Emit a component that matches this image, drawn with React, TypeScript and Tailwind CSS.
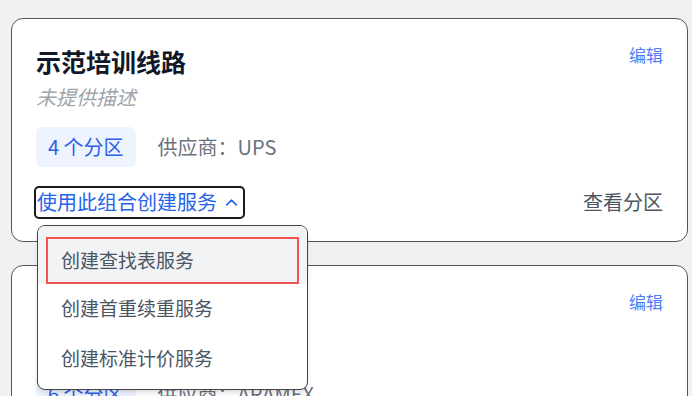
import { ChevronUp } from "lucide-react";

const font = { fontFamily: '"Noto Sans CJK SC", "Noto Sans", sans-serif' };

interface RouteCard {
  title: string;
  desc: string;
  zones: number;
  carrier: string;
}

const cards: RouteCard[] = [
  { title: "示范培训线路", desc: "未提供描述", zones: 4, carrier: "UPS" },
  { title: "中东专线", desc: "未提供描述", zones: 6, carrier: "ARAMEX" },
];

function Card({ card, open }: { card: RouteCard; open: boolean }) {
  return (
    <div className="rounded-xl border border-[#555] bg-white px-6 pt-6 pb-6 shrink-0">
      <div className="flex items-start justify-between">
        <div>
          <h2 className="text-[25px] font-bold leading-[36px] text-[#111827]">
            {card.title}
          </h2>
          <p className="mt-[3px] text-[20px] italic leading-[30px] text-[#a0a4ab]">
            {card.desc}
          </p>
        </div>
        <button className="text-[17px] leading-[24px] text-[#4f7cf7]">编辑</button>
      </div>

      <div className="mt-[15px] flex items-center gap-[22px]">
        <span className="flex h-[40px] items-center rounded-md bg-[#eef4ff] px-3 text-[20px] text-[#2f5fe6]">
          {card.zones} 个分区
        </span>
        <span className="text-[20px] text-[#6b7280]">供应商：{card.carrier}</span>
      </div>

      <div className="mt-[20px] flex items-center justify-between">
        <div className="relative">
          <button className="flex h-[29px] items-center gap-[5px] rounded-[3px] pl-[1px] pr-[2px] text-[20px] leading-[28px] text-[#2563eb] outline-2 outline-[#1a1a1a]">
            使用此组合创建服务
            <ChevronUp className="size-[19px]" strokeWidth={2} />
          </button>
          {open && (
            <div className="absolute left-[1px] top-[37px] z-10 w-[271px] overflow-hidden rounded-lg border border-[#444] bg-white pb-[5px] shadow-md">
              <div className="bg-[#f2f3f5] px-2 pt-[11px]">
                <div className="flex h-[47px] items-center border-2 border-[#f05252] pl-[13px] text-[19px] text-[#4b5563]">
                  创建查找表服务
                </div>
              </div>
              <div className="flex h-[50px] items-center pl-[23px] text-[19px] text-[#4b5563]">
                创建首重续重服务
              </div>
              <div className="flex h-[50px] items-center pl-[23px] text-[19px] text-[#4b5563]">
                创建标准计价服务
              </div>
            </div>
          )}
        </div>
        <button className="text-[20px] text-[#4b5563]">查看分区</button>
      </div>
    </div>
  );
}

export default function App() {
  return (
    <div
      className="flex h-[396px] flex-col gap-[23px] overflow-hidden bg-[#f0f1f3] pl-[11px] pr-[4px] pt-[18px]"
      style={font}
    >
      {cards.map((c, i) => (
        <Card key={c.title} card={c} open={i === 0} />
      ))}
    </div>
  );
}
